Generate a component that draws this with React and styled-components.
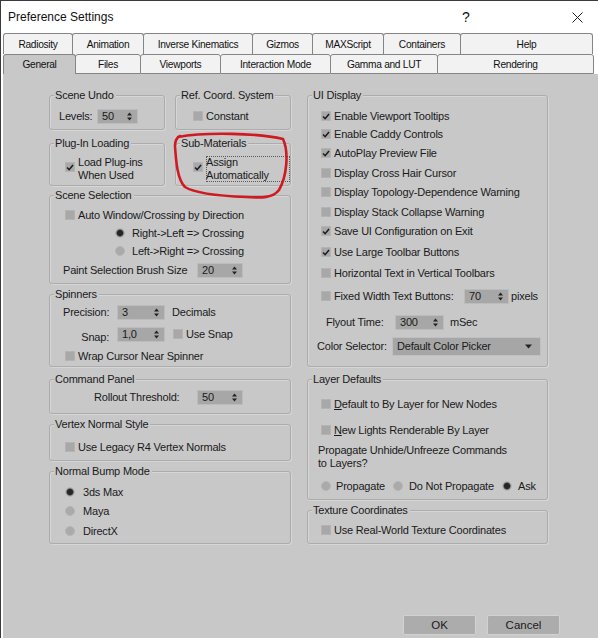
import React from "react";
import styled, { createGlobalStyle } from "styled-components";

const FONT = `"Liberation Sans", Arial, sans-serif`;

const GlobalStyle = createGlobalStyle`
  html, body {
    margin: 0;
    padding: 0;
    background: #ffffff;
  }
  body {
    font-family: ${FONT};
    color: #1a1a1a;
  }
`;

const Window = styled.div`
  position: relative;
  width: 598px;
  height: 638px;
  box-sizing: border-box;
  border-left: 1px solid #3a3a3a;
  border-top: 1px solid #3a3a3a;
  background: #ffffff;
  display: flex;
  flex-direction: column;
  overflow: hidden;
`;

const TitleBar = styled.div`
  height: 32px;
  display: flex;
  align-items: center;
  padding-left: 7px;
  font-size: 12px;
  color: #111;
`;

const TitleText = styled.div`
  flex: 1;
`;

const HelpGlyph = styled.span`
  width: 14px;
  margin-right: 98px;
  font-size: 14px;
  text-align: center;
`;

const CloseGlyph = styled.span`
  width: 12px;
  height: 12px;
  margin-right: 15px;
  display: flex;
  align-items: center;
  justify-content: center;
`;

const TabStrip = styled.div`
  margin-left: 2px;
  display: flex;
  flex-direction: column;
`;

const TabRow = styled.div`
  display: flex;
  height: ${(p) => p.$h}px;
`;

const Tab = styled.div`
  box-sizing: border-box;
  flex: none;
  width: ${(p) => p.$w}px;
  height: 100%;
  margin-right: -1px;
  border: 1px solid #858585;
  border-bottom: ${(p) => (p.$bottom && !p.$active ? "1px solid #858585" : "none")};
  border-radius: 3px 3px 0 0;
  background: ${(p) => (p.$active ? "#c8c8c8" : "#f2f2f2")};
  display: flex;
  align-items: center;
  justify-content: center;
  font-size: 10.2px;
  letter-spacing: -0.3px;
  color: #111;
`;

const Panel = styled.div`
  flex: 1;
  margin-left: 2px;
  background: #c8c8c8;
  padding: 21px 0 3px 46px;
  display: flex;
  flex-direction: column;
`;

const Columns = styled.div`
  display: grid;
  grid-template-columns: 242px 241px;
  column-gap: 16px;
  align-items: start;
`;

const Column = styled.div`
  display: flex;
  flex-direction: column;
`;

const Pair = styled.div`
  display: grid;
  grid-template-columns: 116px 116px;
  column-gap: 10px;
  margin-top: ${(p) => p.$mt || 0}px;
`;

const Box = styled.div`
  box-sizing: border-box;
  height: ${(p) => p.$h}px;
  margin-top: ${(p) => p.$mt || 0}px;
  border: 1px solid #acacac;
  border-radius: 3px;
  box-shadow: inset 1px 1px 0 #d6d6d6, 1px 1px 0 #d6d6d6;
  display: flex;
  flex-direction: column;
  font-size: 11px;
  letter-spacing: -0.2px;
`;

const BoxTitle = styled.div`
  align-self: flex-start;
  height: 14px;
  line-height: 14px;
  margin: -8px 0 -6px 4px;
  padding: 0 2px 0 1px;
  background: #c8c8c8;
  white-space: nowrap;
  position: relative;
`;

const Row = styled.div`
  display: flex;
  align-items: ${(p) => (p.$top ? "flex-start" : "center")};
  height: ${(p) => p.$h || 16}px;
  margin-top: ${(p) => p.$mt || 0}px;
  padding-left: ${(p) => p.$pl || 0}px;
  white-space: nowrap;
`;

const Label = styled.span`
  flex: none;
  width: ${(p) => (p.$w ? `${p.$w}px` : "auto")};
  text-align: ${(p) => p.$align || "left"};
  margin-left: ${(p) => p.$ml || 0}px;
  margin-top: ${(p) => p.$dy || 0}px;
`;

const Lines = styled.div`
  line-height: 13px;
  margin-left: ${(p) => p.$ml || 0}px;
`;

const Square = styled.span`
  flex: none;
  box-sizing: border-box;
  width: 10px;
  height: 10px;
  margin-left: ${(p) => p.$ml || 0}px;
  margin-top: ${(p) => p.$mtop || 0}px;
  margin-right: 3px;
  background: #a8a8a8;
  border: 1px solid #b3b3b3;
  display: flex;
  align-items: center;
  justify-content: center;
`;

const Dot = styled.span`
  flex: none;
  box-sizing: border-box;
  width: 10px;
  height: 10px;
  border-radius: 50%;
  margin-right: ${(p) => p.$gap || 5}px;
  background: ${(p) =>
    p.$on
      ? "radial-gradient(circle, #262626 0 2.6px, #555 3.2px, #9a9a9a 4px)"
      : "#aaaaaa"};
  border: 1px solid #b5b5b5;
`;

const RadioOption = styled.span`
  display: flex;
  align-items: center;
  flex: none;
  width: ${(p) => (p.$w ? `${p.$w}px` : "auto")};
`;

const SpinBox = styled.span`
  flex: none;
  box-sizing: border-box;
  width: ${(p) => p.$w}px;
  height: 15px;
  margin-left: ${(p) => p.$ml || 0}px;
  background: #a7a7a7;
  border: 1px solid #bcbcbc;
  display: flex;
  align-items: center;
  justify-content: space-between;
  padding: 0 5px 0 4px;
  font-size: 11px;
`;

const DropBox = styled.span`
  flex: none;
  box-sizing: border-box;
  width: 149px;
  height: 19px;
  background: #a6a6a6;
  border: 1px solid #c0c0c0;
  display: flex;
  align-items: center;
  justify-content: space-between;
  padding: 0 8px 0 4px;
`;

const FocusLabel = styled.span`
  box-sizing: border-box;
  width: 84px;
  line-height: 13px;
  outline: 1px dotted #5a5a5a;
  outline-offset: -1px;
`;

const U = styled.span`
  text-decoration: underline;
`;

const ButtonBar = styled.div`
  margin-top: auto;
  display: flex;
  justify-content: flex-end;
  gap: 11px;
  padding-right: 38px;
`;

const Button = styled.div`
  box-sizing: border-box;
  width: 73px;
  height: 20px;
  background: #acacac;
  border: 1px solid #d2d2d2;
  border-radius: 2px;
  display: flex;
  align-items: center;
  justify-content: center;
  font-size: 11.5px;
`;

const Annotation = styled.svg`
  position: absolute;
  left: -1px;
  top: -1px;
  pointer-events: none;
`;

const CheckBox = ({ checked, ml, mtop }) => (
  <Square $ml={ml} $mtop={mtop}>
    {checked && (
      <svg width="9" height="9" viewBox="0 0 9 9">
        <path d="M1.2 4.6 L3.5 7 L7.9 1.6" fill="none" stroke="#1c1c1c" strokeWidth="1.7" />
      </svg>
    )}
  </Square>
);

const Spinner = ({ w, value, ml }) => (
  <SpinBox $w={w} $ml={ml}>
    <span>{value}</span>
    <svg width="5" height="9" viewBox="0 0 5 9">
      <polygon points="0,3.6 2.5,0.6 5,3.6" fill="#222" />
      <polygon points="0,5.4 2.5,8.4 5,5.4" fill="#222" />
    </svg>
  </SpinBox>
);

const topTabs = [
  ["Radiosity", 70],
  ["Animation", 72],
  ["Inverse Kinematics", 110],
  ["Gizmos", 61],
  ["MAXScript", 72],
  ["Containers", 78],
  ["Help", 133],
];

const bottomTabs = [
  ["General", 73],
  ["Files", 66],
  ["Viewports", 81],
  ["Interaction Mode", 111],
  ["Gamma and LUT", 108],
  ["Rendering", 157],
];

const uiDisplay = [
  ["Enable Viewport Tooltips", true, 12],
  ["Enable Caddy Controls", true, 2],
  ["AutoPlay Preview File", true, 3],
  ["Display Cross Hair Cursor", false, 4],
  ["Display Topology-Dependence Warning", false, 3],
  ["Display Stack Collapse Warning", false, 4],
  ["Save UI Configuration on Exit", true, 3],
  ["Use Large Toolbar Buttons", true, 5],
  ["Horizontal Text in Vertical Toolbars", false, 5],
];

export default function App() {
  return (
    <>
      <GlobalStyle />
      <Window>
        <TitleBar>
          <TitleText>Preference Settings</TitleText>
          <HelpGlyph>?</HelpGlyph>
          <CloseGlyph>
            <svg width="11" height="11" viewBox="0 0 11 11">
              <path d="M0.5 0.5 L10.5 10.5 M10.5 0.5 L0.5 10.5" stroke="#222" strokeWidth="1" />
            </svg>
          </CloseGlyph>
        </TitleBar>

        <TabStrip>
          <TabRow $h={21}>
            {topTabs.map(([name, w]) => (
              <Tab key={name} $w={w}>{name}</Tab>
            ))}
          </TabRow>
          <TabRow $h={20}>
            {bottomTabs.map(([name, w], i) => (
              <Tab key={name} $w={w} $bottom $active={i === 0}>{name}</Tab>
            ))}
          </TabRow>
        </TabStrip>

        <Panel>
          <Columns>
            <Column>
              <Pair>
                <Box $h={35}>
                  <BoxTitle>Scene Undo</BoxTitle>
                  <Row $mt={12} $pl={9}>
                    <Label $w={38}>Levels:</Label>
                    <Spinner w={41} value="50" />
                  </Row>
                </Box>
                <Box $h={35}>
                  <BoxTitle>Ref. Coord. System</BoxTitle>
                  <Row $mt={12} $pl={17}>
                    <CheckBox />
                    <Label>Constant</Label>
                  </Row>
                </Box>
              </Pair>

              <Pair $mt={13}>
                <Box $h={43}>
                  <BoxTitle>Plug-In Loading</BoxTitle>
                  <Row $top $h={26} $mt={12} $pl={15}>
                    <CheckBox checked mtop={6} />
                    <Lines>Load Plug-ins<br />When Used</Lines>
                  </Row>
                </Box>
                <Box $h={43}>
                  <BoxTitle>Sub-Materials</BoxTitle>
                  <Row $top $h={26} $mt={12} $pl={17}>
                    <CheckBox checked mtop={6} />
                    <FocusLabel>Assign<br />Automatically</FocusLabel>
                  </Row>
                </Box>
              </Pair>

              <Box $h={89} $mt={9}>
                <BoxTitle>Scene Selection</BoxTitle>
                <Row $mt={11} $pl={15}>
                  <CheckBox />
                  <Label>Auto Window/Crossing by Direction</Label>
                </Row>
                <Row $mt={2} $pl={65}>
                  <RadioOption><Dot $on $gap={7} />Right-&gt;Left =&gt; Crossing</RadioOption>
                </Row>
                <Row $mt={2} $pl={65}>
                  <RadioOption><Dot $gap={7} />Left-&gt;Right =&gt; Crossing</RadioOption>
                </Row>
                <Row $mt={3} $pl={13}>
                  <Label $w={134}>Paint Selection Brush Size</Label>
                  <Spinner w={46} value="20" />
                </Row>
              </Box>

              <Box $h={73} $mt={10}>
                <BoxTitle>Spinners</BoxTitle>
                <Row $mt={9} $pl={13}>
                  <Label $w={46} $align="right">Precision:</Label>
                  <Spinner w={48} value="3" ml={8} />
                  <Label $ml={7}>Decimals</Label>
                </Row>
                <Row $mt={6} $pl={13}>
                  <Label $w={46} $align="right" $dy={6}>Snap:</Label>
                  <Spinner w={48} value="1,0" ml={8} />
                  <CheckBox ml={8} />
                  <Label>Use Snap</Label>
                </Row>
                <Row $mt={6} $pl={15}>
                  <CheckBox />
                  <Label>Wrap Cursor Near Spinner</Label>
                </Row>
              </Box>

              <Box $h={35} $mt={12}>
                <BoxTitle>Command Panel</BoxTitle>
                <Row $mt={9} $pl={44}>
                  <Label $w={103}>Rollout Threshold:</Label>
                  <Spinner w={46} value="50" />
                </Row>
              </Box>

              <Box $h={37} $mt={10}>
                <BoxTitle>Vertex Normal Style</BoxTitle>
                <Row $mt={14} $pl={15}>
                  <CheckBox />
                  <Label>Use Legacy R4 Vertex Normals</Label>
                </Row>
              </Box>

              <Box $h={73} $mt={10}>
                <BoxTitle>Normal Bump Mode</BoxTitle>
                <Row $mt={12} $pl={15}>
                  <RadioOption><Dot $on $gap={8} />3ds Max</RadioOption>
                </Row>
                <Row $mt={3} $pl={15}>
                  <RadioOption><Dot $gap={8} />Maya</RadioOption>
                </Row>
                <Row $mt={4} $pl={15}>
                  <RadioOption><Dot $gap={8} />DirectX</RadioOption>
                </Row>
              </Box>
            </Column>

            <Column>
              <Box $h={272}>
                <BoxTitle>UI Display</BoxTitle>
                {uiDisplay.map(([text, on, mt]) => (
                  <Row key={text} $mt={mt} $pl={13}>
                    <CheckBox checked={on} />
                    <Label>{text}</Label>
                  </Row>
                ))}
                <Row $mt={7} $pl={13}>
                  <CheckBox />
                  <Label $w={130}>Fixed Width Text Buttons:</Label>
                  <Spinner w={45} value="70" />
                  <Label $ml={2}>pixels</Label>
                </Row>
                <Row $mt={10} $pl={18}>
                  <Label $w={69}>Flyout Time:</Label>
                  <Spinner w={49} value="300" />
                  <Label $ml={6}>mSec</Label>
                </Row>
                <Row $mt={8} $pl={9}>
                  <Label $w={75}>Color Selector:</Label>
                  <DropBox>
                    <span>Default Color Picker</span>
                    <svg width="7" height="5" viewBox="0 0 7 5">
                      <polygon points="0,0.5 7,0.5 3.5,4.5" fill="#222" />
                    </svg>
                  </DropBox>
                </Row>
              </Box>

              <Box $h={121} $mt={12}>
                <BoxTitle>Layer Defaults</BoxTitle>
                <Row $mt={16} $pl={13}>
                  <CheckBox />
                  <Label><U>D</U>efault to By Layer for New Nodes</Label>
                </Row>
                <Row $mt={10} $pl={13}>
                  <CheckBox />
                  <Label><U>N</U>ew Lights Renderable By Layer</Label>
                </Row>
                <Row $h={26} $mt={6} $pl={10}>
                  <Lines>Propagate Unhide/Unfreeze Commands<br />to Layers?</Lines>
                </Row>
                <Row $mt={8} $pl={13}>
                  <RadioOption $w={72}><Dot />Propagate</RadioOption>
                  <RadioOption $w={109}><Dot $gap={6} />Do Not Propagate</RadioOption>
                  <RadioOption><Dot $on $gap={6} />Ask</RadioOption>
                </Row>
              </Box>

              <Box $h={34} $mt={10}>
                <BoxTitle>Texture Coordinates</BoxTitle>
                <Row $mt={11} $pl={13}>
                  <CheckBox />
                  <Label>Use Real-World Texture Coordinates</Label>
                </Row>
              </Box>
            </Column>
          </Columns>

          <ButtonBar>
            <Button>OK</Button>
            <Button>Cancel</Button>
          </ButtonBar>
        </Panel>

        <Annotation width="598" height="638" viewBox="0 0 598 638">
          <path
            d="M178 137 C205 132 258 133 283 139 C289 152 287 176 279 190 C273 198 262 198 246 197 C220 196 196 194 185 187 C177 179 176 160 175 146 C175 141 176 138 180 136"
            fill="none"
            stroke="#cf1a22"
            strokeWidth="2.6"
            strokeLinecap="round"
          />
        </Annotation>
      </Window>
    </>
  );
}
